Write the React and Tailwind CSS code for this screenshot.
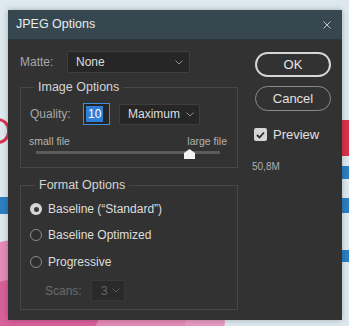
import React from "react";

const Chevron = ({ className = "" }) => (
  <svg width="8" height="5" viewBox="0 0 8 5" className={className}>
    <polyline points="0.5,0.5 4,4 7.5,0.5" fill="none" stroke="currentColor" strokeWidth="1" />
  </svg>
);

const Radio = ({ checked }) =>
  checked ? (
    <span className="w-[12px] h-[12px] rounded-full bg-[#d6d6d6] flex items-center justify-center">
      <span className="w-[5px] h-[5px] rounded-full bg-[#3a3a3a]" />
    </span>
  ) : (
    <span className="w-[12px] h-[12px] rounded-full border border-[#8c8c8c] bg-[#2e2e2e]" />
  );

export default function App() {
  return (
    <div
      className="relative w-[349px] h-[326px] overflow-hidden bg-[#dde9ee]"
      style={{ fontFamily: '"Liberation Sans", Arial, sans-serif' }}
    >
      {/* background artwork behind dialog */}
      <div className="absolute left-[-14px] top-[118px] w-[24px] h-[26px] rounded-full border-[3px] border-[#d8344c]" />
      <div className="absolute left-0 top-[197px] w-[12px] h-[17px] bg-[#2b7fc3]" />
      <div className="absolute left-[-40px] top-[240px] w-[240px] h-[110px] rounded-full bg-[#e48bb6]" />
      <div className="absolute left-[-20px] top-[280px] w-[120px] h-[60px] rounded-full bg-[#d8609a]" />
      <div className="absolute left-[185px] top-[312px] w-[40px] h-[20px] rounded-full bg-[#e69abf]" />
      <div className="absolute left-[340px] top-[120px] w-[12px] h-[36px] bg-[#d8344c]" />
      <div className="absolute left-[340px] top-[166px] w-[12px] h-[13px] bg-[#2b7fc3]" />
      <div className="absolute left-[340px] top-[198px] w-[12px] h-[15px] bg-[#2b7fc3]" />
      <div className="absolute left-[340px] top-[250px] w-[12px] h-[12px] bg-[#2b7fc3]" />

      {/* dialog */}
      <div className="absolute left-[8px] top-[10px] w-[334px] h-[310px] bg-[#323232] flex flex-col shadow-[0_0_6px_rgba(0,0,0,0.25)]">
        <div className="h-[30px] bg-[#36474f] flex items-center justify-between pl-[8px] pr-[11px] border-b border-[#2c3a40]">
          <span className="text-[#e8ecee] text-[12.5px] leading-none">JPEG Options</span>
          <svg width="8" height="8" viewBox="0 0 8 8">
            <path d="M0.5 0.5 L7.5 7.5 M7.5 0.5 L0.5 7.5" stroke="#b9c5ca" strokeWidth="1" />
          </svg>
        </div>

        <div className="flex flex-1">
          {/* left column */}
          <div className="ml-[12px] w-[218px] pt-[11px] flex flex-col">
            <div className="flex items-center h-[22px]">
              <span className="text-[#a8a8a8] text-[12px] w-[47px]">Matte:</span>
              <div className="w-[123px] h-[22px] bg-[#262626] border border-[#3e3e3e] rounded-[2px] flex items-center justify-between pl-[8px] pr-[6px]">
                <span className="text-[#dedede] text-[12px]">None</span>
                <Chevron className="text-[#8e8e8e]" />
              </div>
            </div>

            {/* Image Options */}
            <div className="relative mt-[14px] h-[81px] border border-[#474747] pt-[15px] pl-[8px]">
              <span className="absolute left-[13px] top-[-9px] px-[4px] bg-[#323232] text-[#d4d4d4] text-[12.5px] leading-[16px]">
                Image Options
              </span>
              <div className="flex items-center h-[22px] pl-[1px]">
                <span className="text-[#a8a8a8] text-[12px] w-[53px]">Quality:</span>
                <div className="w-[27px] h-[22px] border border-[#3d8ee0] bg-[#262626] flex items-center pl-[2px]">
                  <span className="bg-[#2f7fd6] text-white text-[12px] leading-[16px] px-[2px]">10</span>
                </div>
                <div className="ml-[9px] w-[81px] h-[21px] bg-[#262626] border border-[#3e3e3e] rounded-[2px] flex items-center justify-between pl-[8px] pr-[5px]">
                  <span className="text-[#dedede] text-[12px]">Maximum</span>
                  <Chevron className="text-[#8e8e8e]" />
                </div>
              </div>
              <div className="flex justify-between pr-[10px] mt-[10px] h-[12px] items-center">
                <span className="text-[#b4b4b4] text-[10.5px] leading-none">small file</span>
                <span className="text-[#b4b4b4] text-[10.5px] leading-none">large file</span>
              </div>
              <div className="relative ml-[7px] mt-[4px] w-[184px] h-[3px] bg-[#5b5b5b]">
                <svg
                  width="11"
                  height="10"
                  viewBox="0 0 11 10"
                  className="absolute left-[148px] top-[-2px]"
                >
                  <path d="M5.5 0 L11 4 L11 10 L0 10 L0 4 Z" fill="#f2f2f2" />
                </svg>
              </div>
            </div>

            {/* Format Options */}
            <div className="relative mt-[17px] h-[125px] border border-[#474747] pt-[15px] pl-[9px] flex flex-col">
              <span className="absolute left-[14px] top-[-9px] px-[4px] bg-[#323232] text-[#d4d4d4] text-[12.5px] leading-[16px]">
                Format Options
              </span>
              <div className="flex items-center h-[16px] gap-[6px]">
                <Radio checked />
                <span className="text-[#dedede] text-[12px]">Baseline (“Standard”)</span>
              </div>
              <div className="flex items-center h-[16px] gap-[6px] mt-[10px]">
                <Radio />
                <span className="text-[#dedede] text-[12px]">Baseline Optimized</span>
              </div>
              <div className="flex items-center h-[16px] gap-[6px] mt-[11px]">
                <Radio />
                <span className="text-[#dedede] text-[12px]">Progressive</span>
              </div>
              <div className="flex items-center h-[21px] mt-[10px] pl-[15px]">
                <span className="text-[#6c6c6c] text-[12px] w-[46px]">Scans:</span>
                <div className="w-[34px] h-[21px] bg-[#2a2a2a] border border-[#383838] flex items-center justify-between pl-[9px] pr-[4px]">
                  <span className="text-[#666] text-[12px]">3</span>
                  <Chevron className="text-[#5c5c5c]" />
                </div>
              </div>
            </div>
          </div>

          {/* right column */}
          <div className="ml-[17px] w-[76px] pt-[12px] flex flex-col">
            <div className="h-[25px] rounded-full border-[2px] border-[#d6d6d6] flex items-center justify-center text-[#e8e8e8] text-[13px]">
              OK
            </div>
            <div className="mt-[9px] h-[25px] rounded-full border border-[#8a8a8a] flex items-center justify-center text-[#e0e0e0] text-[13px]">
              Cancel
            </div>
            <div className="mt-[17px] h-[13px] flex items-center gap-[6px] -ml-[1px]">
              <span className="w-[13px] h-[13px] rounded-[2px] bg-[#d6d6d6] flex items-center justify-center">
                <svg width="9" height="8" viewBox="0 0 9 8">
                  <polyline points="1,4 3.5,6.5 8,1.5" fill="none" stroke="#2e2e2e" strokeWidth="1.8" />
                </svg>
              </span>
              <span className="text-[#e0e0e0] text-[13px] leading-none">Preview</span>
            </div>
            <div className="mt-[21px] -ml-[3px] text-[#b0b0b0] text-[10px] leading-none">50,8M</div>
          </div>
        </div>
      </div>
    </div>
  );
}
